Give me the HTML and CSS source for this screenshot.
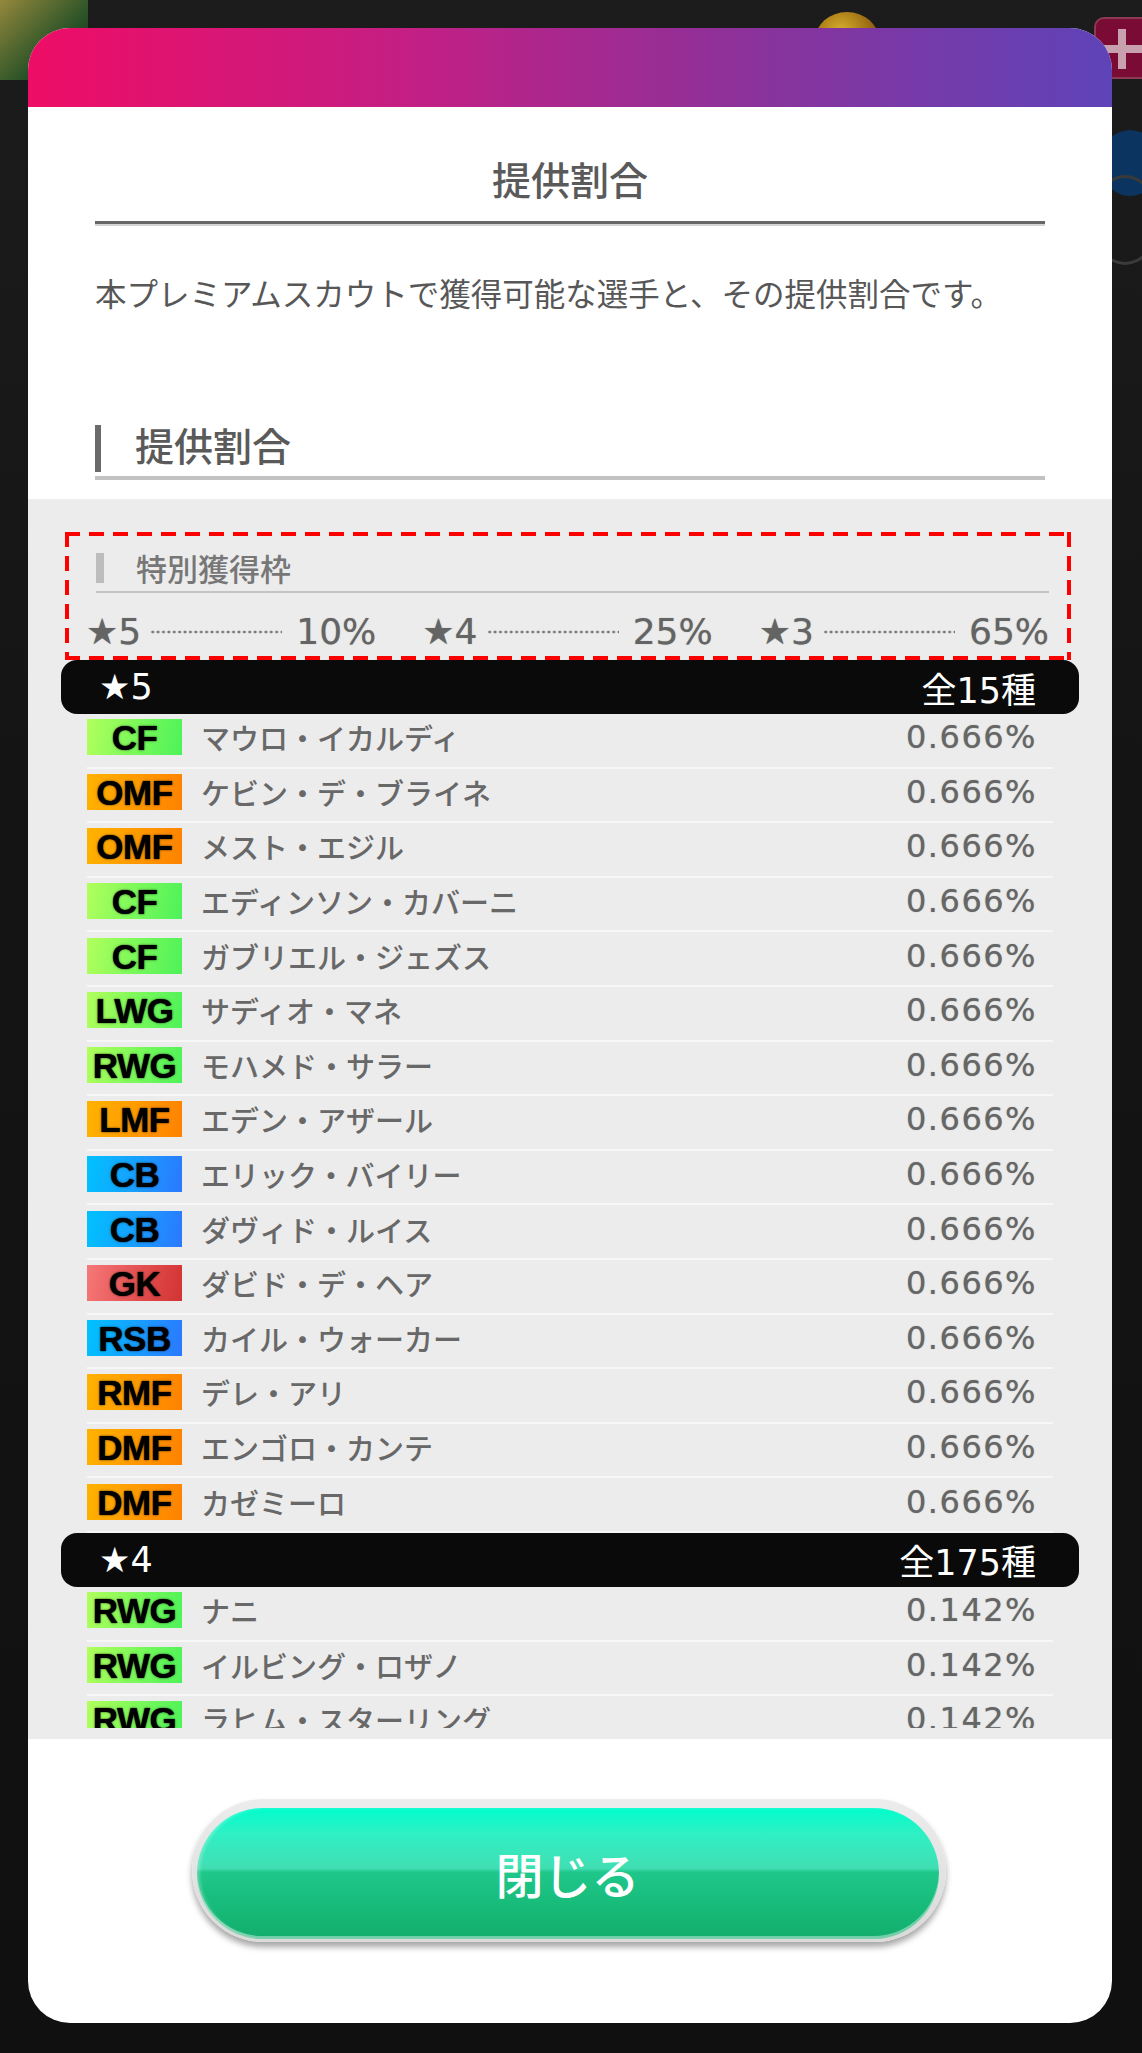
FILE: index.html
```html
<!DOCTYPE html>
<html lang="ja">
<head>
	<meta charset="utf-8">
	<title>提供割合</title>
	<link rel="stylesheet" href="styles.css">
</head>
<body>
	<!-- game screen behind the dialog -->
	<div class="backdrop">
		<div class="deco deco-green"></div>
		<div class="deco deco-coin"></div>
		<div class="deco deco-plus">
			<svg width="60" height="62" viewBox="0 0 60 62"><path d="M24 12h8v16h16v8H32v16h-8V36H8v-8h16z" fill="#c9a0ad"/></svg>
		</div>
		<div class="deco deco-blue"></div>
		<div class="deco deco-ring"></div>
	</div>

	<div class="modal">
		<div class="modal-head"></div>

		<div class="intro">
			<h1 class="title">提供割合</h1>
			<p class="desc">本プレミアムスカウトで獲得可能な選手と、その提供割合です。</p>
			<h2 class="section-head"><span class="bar"></span><span class="label">提供割合</span></h2>
		</div>

		<div class="list-area">
			<div class="list-view">
				<div class="rate-box">
					<div class="rate-head"><span class="bar"></span>特別獲得枠</div>
					<div class="rates">
						<div class="rate"><span>★5</span><i class="dots"></i><span>10%</span></div>
						<div class="rate"><span>★4</span><i class="dots"></i><span>25%</span></div>
						<div class="rate"><span>★3</span><i class="dots"></i><span>65%</span></div>
					</div>
				</div>

				<div class="rarity"><span>★5</span><span>全15種</span></div>
				<ul class="players">
					<li><span class="pos green">CF</span><span class="name">マウロ・イカルディ</span><span class="pct">0.666%</span></li>
					<li><span class="pos orange">OMF</span><span class="name">ケビン・デ・ブライネ</span><span class="pct">0.666%</span></li>
					<li><span class="pos orange">OMF</span><span class="name">メスト・エジル</span><span class="pct">0.666%</span></li>
					<li><span class="pos green">CF</span><span class="name">エディンソン・カバーニ</span><span class="pct">0.666%</span></li>
					<li><span class="pos green">CF</span><span class="name">ガブリエル・ジェズス</span><span class="pct">0.666%</span></li>
					<li><span class="pos green">LWG</span><span class="name">サディオ・マネ</span><span class="pct">0.666%</span></li>
					<li><span class="pos green">RWG</span><span class="name">モハメド・サラー</span><span class="pct">0.666%</span></li>
					<li><span class="pos orange">LMF</span><span class="name">エデン・アザール</span><span class="pct">0.666%</span></li>
					<li><span class="pos blue">CB</span><span class="name">エリック・バイリー</span><span class="pct">0.666%</span></li>
					<li><span class="pos blue">CB</span><span class="name">ダヴィド・ルイス</span><span class="pct">0.666%</span></li>
					<li><span class="pos red">GK</span><span class="name">ダビド・デ・ヘア</span><span class="pct">0.666%</span></li>
					<li><span class="pos blue">RSB</span><span class="name">カイル・ウォーカー</span><span class="pct">0.666%</span></li>
					<li><span class="pos orange">RMF</span><span class="name">デレ・アリ</span><span class="pct">0.666%</span></li>
					<li><span class="pos orange">DMF</span><span class="name">エンゴロ・カンテ</span><span class="pct">0.666%</span></li>
					<li><span class="pos orange">DMF</span><span class="name">カゼミーロ</span><span class="pct">0.666%</span></li>
				</ul>

				<div class="rarity"><span>★4</span><span>全175種</span></div>
				<ul class="players">
					<li><span class="pos green">RWG</span><span class="name">ナニ</span><span class="pct">0.142%</span></li>
					<li><span class="pos green">RWG</span><span class="name">イルビング・ロザノ</span><span class="pct">0.142%</span></li>
					<li><span class="pos green">RWG</span><span class="name">ラヒム・スターリング</span><span class="pct">0.142%</span></li>
				</ul>
			</div>
		</div>

		<div class="footer">
			<button class="close-btn" type="button"><span>閉じる</span></button>
		</div>
	</div>
</body>
</html>
```

FILE: styles.css
```css
* {
	box-sizing: border-box;
}
body {
	margin: 0;
	width: 1142px;
	height: 2053px;
	overflow: hidden;
	position: relative;
	background: #141414;
	font-family: "Noto Sans CJK JP", "Noto Sans", sans-serif;
	color: #5e5e5e;
}

/* background bits of the game screen */
.backdrop {
	position: absolute;
	inset: 0;
	background: linear-gradient(180deg, #1c1c1c 0%, #141414 40%, #101010 100%);
}
.deco {
	position: absolute;
}
.deco-green {
	left: 0;
	top: 0;
	width: 88px;
	height: 80px;
	background: linear-gradient(135deg, #c8b64a, #2f6a2c 60%, #1d2a1a);
	border-bottom-right-radius: 30px;
	opacity: .7;
}
.deco-coin {
	left: 815px;
	top: 12px;
	width: 64px;
	height: 56px;
	border-radius: 50%;
	background: radial-gradient(circle at 40% 35%, #d9b02c, #8a5a0c 70%);
}
.deco-plus {
	left: 1094px;
	top: 17px;
	width: 60px;
	height: 62px;
	border-radius: 10px;
	background: #7a0b34;
	border: 2px solid #8a3a55;
	overflow: hidden;
}
.deco-plus svg {
	display: block;
	margin: -2px 0 0 -2px;
}
.deco-blue {
	left: 1100px;
	top: 130px;
	width: 60px;
	height: 66px;
	border-radius: 50%;
	background: #0b3560;
}
.deco-ring {
	left: 1090px;
	top: 175px;
	width: 70px;
	height: 90px;
	border-radius: 50%;
	border: 3px solid #3a3a3a;
}

/* dialog */
.modal {
	position: relative;
	margin: 28px 0 0 28px;
	width: 1084px;
	height: 1995px;
	background: #fff;
	border-radius: 42px;
	overflow: hidden;
	display: flex;
	flex-direction: column;
}
.modal-head {
	height: 79px;
	flex: none;
	background: linear-gradient(90deg, #ee0d66 0%, #c41f84 35%, #8d3199 65%, #5e43b8 100%);
}

.intro {
	flex: none;
	padding: 46px 67px 19px;
}
.title {
	margin: 0;
	font-size: 39px;
	font-weight: 500;
	line-height: 50px;
	text-align: center;
	color: #5a5a5a;
	padding-bottom: 18px;
	border-bottom: 3px solid #666;
	box-shadow: 0 2px 0 #d4d4d4;
}
.desc {
	margin: 47px 0 0;
	font-size: 31.5px;
	line-height: 42px;
	color: #575757;
	white-space: nowrap;
}
.section-head {
	margin: 112px 0 0;
	display: flex;
	align-items: center;
	font-size: 39px;
	font-weight: 500;
	line-height: 47px;
	color: #5a5a5a;
	padding-bottom: 4px;
	border-bottom: 4px solid #c2c2c2;
}
.section-head .bar {
	width: 6px;
	height: 47px;
	background: #6a6a6a;
	margin-right: 34px;
}
.section-head .label {
	line-height: 39px;
	padding-bottom: 8px;
}

/* scroll list */
.list-area {
	flex: none;
	height: 1240px;
	background: #ececec;
	padding-bottom: 11px;
}
.list-view {
	height: 100%;
	overflow: hidden;
	padding: 0 33px;
}

.rate-box {
	margin: 33px 8px 0 4px;
	padding: 21px 22px 8px 31px;
	background:
		repeating-linear-gradient(90deg, #f00 0 15px, transparent 15px 24px) left top / 100% 4px no-repeat,
		repeating-linear-gradient(90deg, #f00 0 15px, transparent 15px 24px) left bottom / 100% 4px no-repeat,
		repeating-linear-gradient(180deg, #f00 0 15px, transparent 15px 24px) left top / 4px 100% no-repeat,
		repeating-linear-gradient(180deg, #f00 0 15px, transparent 15px 24px) right top / 4px 100% no-repeat;
}
.rate-head {
	display: flex;
	align-items: center;
	font-size: 31px;
	font-weight: 500;
	line-height: 30px;
	color: #777;
	padding-bottom: 8px;
	border-bottom: 2px solid #c4c4c4;
}
.rate-head .bar {
	width: 8px;
	height: 30px;
	background: #bdbdbd;
	margin-right: 32px;
}
.rates {
	margin: 19px 0 0 -10px;
	display: grid;
	grid-template-columns: 1fr 1fr 1fr;
	column-gap: 46px;
	font-family: "DejaVu Sans", sans-serif;
	font-size: 36px;
	line-height: 40px;
	color: #646464;
	text-shadow: 0 0 1px rgba(90, 90, 90, .6);
}
.rate {
	display: flex;
	align-items: center;
}
.rate .dots {
	flex: 1;
	height: 4px;
	margin: 0 14px 0 9px;
	background: radial-gradient(circle, #777 1.2px, transparent 1.7px) 0 0 / 5.4px 4px repeat-x;
}

.rarity {
	height: 54px;
	border-radius: 16px;
	background: #0a0a0a;
	color: #fff;
	display: flex;
	justify-content: space-between;
	align-items: center;
	padding: 0 43px 0 38px;
	font-family: "DejaVu Sans", "Noto Sans CJK JP", sans-serif;
	font-size: 35px;
}

.players {
	list-style: none;
	margin: 0;
	padding: 0;
}
.players li {
	height: 54.6px;
	margin: 0 26px;
	padding: 0 16px 6px 0;
	display: flex;
	align-items: center;
	border-bottom: 2px solid #f7f7f7;
}
.pos {
	width: 95px;
	height: 36px;
	flex: none;
	font-family: "Liberation Sans", Arial, sans-serif;
	font-weight: bold;
	font-size: 35px;
	line-height: 37px;
	letter-spacing: -0.5px;
	text-align: center;
	color: #000;
	text-shadow: 0 0 1px #000, 0 0 3px rgba(0, 0, 0, .4);
}
.green {
	background: linear-gradient(100deg, #b2ff5c 0%, #7cf95a 50%, #4ef25a 100%);
}
.orange {
	background: linear-gradient(100deg, #ffb300 0%, #ff9800 55%, #ff8200 100%);
}
.blue {
	background: linear-gradient(100deg, #00c2ff 0%, #1a9cff 55%, #2b78ff 100%);
}
.red {
	background: linear-gradient(100deg, #f67878 0%, #e34f4f 55%, #d33333 100%);
}
.name {
	flex: 1;
	margin-left: 19px;
	font-size: 29px;
	font-weight: 500;
	color: #686868;
	white-space: nowrap;
}
.pct {
	font-family: "DejaVu Sans", sans-serif;
	font-size: 32px;
	letter-spacing: 1.5px;
	color: #666;
	text-shadow: 0 0 1px rgba(90, 90, 90, .6);
}

/* bottom button */
.footer {
	flex: 1;
	display: flex;
	justify-content: center;
	padding-top: 60px;
}
.close-btn {
	width: 754px;
	height: 143px;
	padding: 9px 7px 3px 5px;
	margin-left: -3px;
	border: none;
	border-radius: 72px;
	background: linear-gradient(180deg, #ececec, #dadada);
	box-shadow: 0 5px 6px rgba(0, 0, 0, .35);
	cursor: pointer;
}
.close-btn span {
	display: block;
	height: 131px;
	border-radius: 66px;
	background: linear-gradient(180deg, #02fdcc 0%, #2ff0c4 20%, #41deb2 46%, #1fc78b 49%, #17bb79 75%, #12ad6c 100%);
	box-shadow: inset 0 -3px 0 rgba(255, 255, 255, .4), inset 3px 0 3px rgba(255, 255, 255, .25);
	color: #fff;
	font-family: "Noto Sans CJK JP", sans-serif;
	font-size: 48px;
	font-weight: 500;
	line-height: 131px;
	text-align: center;
}
```
